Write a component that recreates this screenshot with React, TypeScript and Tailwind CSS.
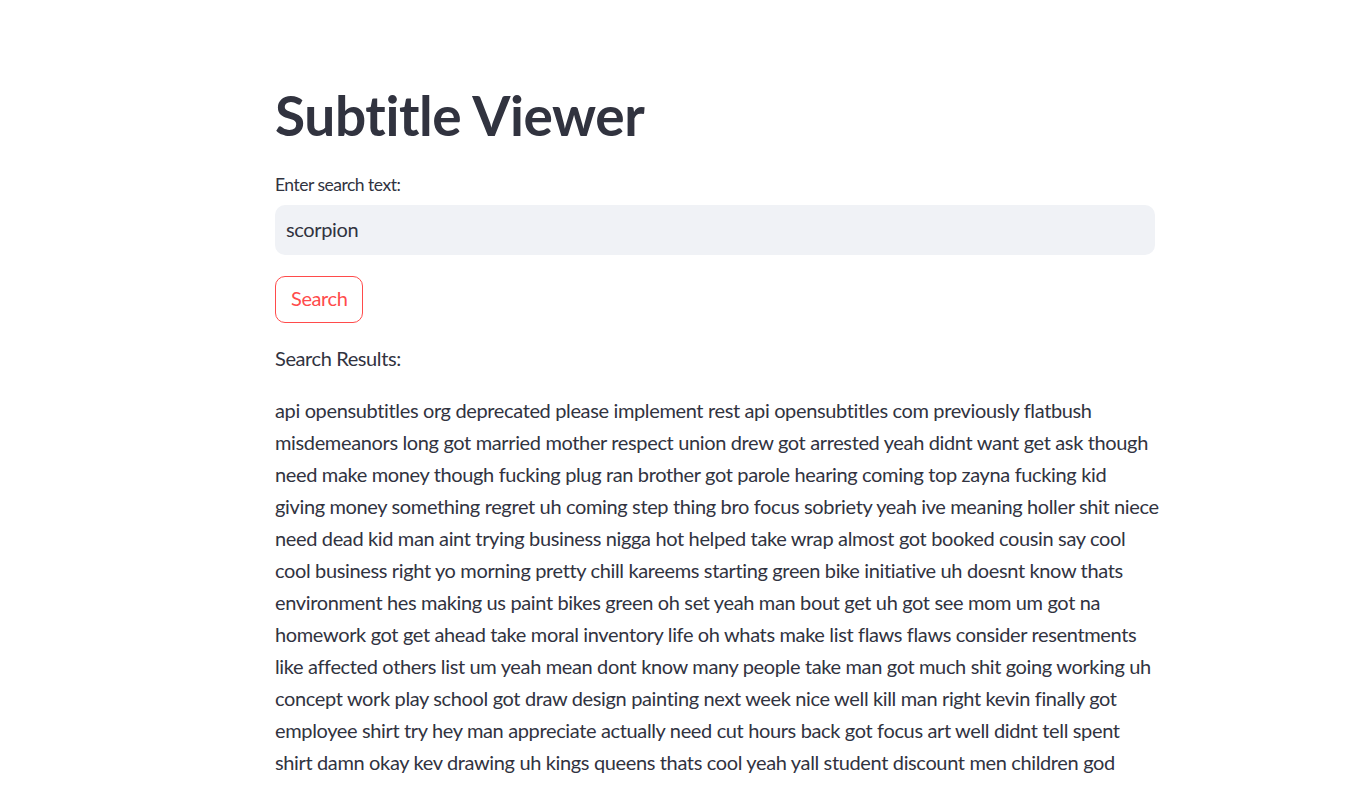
import React from "react";

const lines = [
  "api opensubtitles org deprecated please implement rest api opensubtitles com previously flatbush",
  "misdemeanors long got married mother respect union drew got arrested yeah didnt want get ask though",
  "need make money though fucking plug ran brother got parole hearing coming top zayna fucking kid",
  "giving money something regret uh coming step thing bro focus sobriety yeah ive meaning holler shit niece",
  "need dead kid man aint trying business nigga hot helped take wrap almost got booked cousin say cool",
  "cool business right yo morning pretty chill kareems starting green bike initiative uh doesnt know thats",
  "environment hes making us paint bikes green oh set yeah man bout get uh got see mom um got na",
  "homework got get ahead take moral inventory life oh whats make list flaws flaws consider resentments",
  "like affected others list um yeah mean dont know many people take man got much shit going working uh",
  "concept work play school got draw design painting next week nice well kill man right kevin finally got",
  "employee shirt try hey man appreciate actually need cut hours back got focus art well didnt tell spent",
  "shirt damn okay kev drawing uh kings queens thats cool yeah yall student discount men children god",
];

export default function App() {
  return (
    <div
      className="min-h-screen bg-white text-[#31333f]"
      style={{ fontFamily: "Lato, 'Noto Sans', sans-serif" }}
    >
      <div className="pl-[275px] pt-[82px] w-[1155px]">
        <h1 className="h-[66px] text-[55px] leading-[66px] font-bold tracking-[-0.4px]">
          Subtitle Viewer
        </h1>
        <div className="mt-[26px] h-[22px] text-[17.5px] leading-[22px] tracking-[-0.5px]">
          Enter search text:
        </div>
        <div className="mt-[9px] h-[50px] rounded-[10px] bg-[#f0f2f6] flex items-center px-[11px] pb-[2px] text-[20px] tracking-[-0.35px]">
          scorpion
        </div>
        <div className="mt-[21px] flex">
          <button className="h-[47px] px-[15px] pb-[3px] rounded-[10px] border border-[#ff4b4b] text-[#ff4b4b] text-[20px] tracking-[-0.4px] bg-white">
            Search
          </button>
        </div>
        <div className="mt-[19px] h-[32px] text-[20px] leading-[32px] tracking-[-0.4px]">
          Search Results:
        </div>
        <div className="mt-[20px] text-[20px] leading-[32px] tracking-[-0.36px]">
          {lines.map((l, i) => (
            <div key={i} className="whitespace-nowrap">
              {l}
            </div>
          ))}
        </div>
      </div>
    </div>
  );
}
